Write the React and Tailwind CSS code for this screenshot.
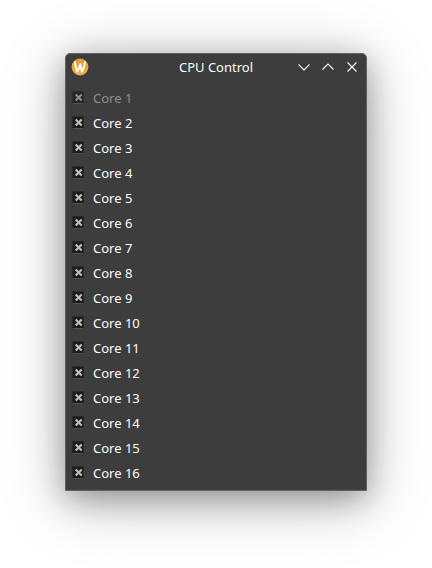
const cores = Array.from({ length: 16 }, (_, i) => i + 1);

function Logo() {
  return (
    <svg className="size-[18px]" viewBox="0 0 18 18" fill="none">
      <defs>
        <linearGradient id="disc" x1="0" y1="0" x2="0" y2="1">
          <stop offset="0" stopColor="#e19a38" />
          <stop offset="1" stopColor="#f0b43c" />
        </linearGradient>
      </defs>
      <circle cx="9" cy="9" r="8.4" fill="url(#disc)" />
      <path
        d="M3.8 4.2C4.4 7.8 5 10.800 6.200 13.500C7.700 11.400 8.600 9 9.300 6.300C9.500 9 10 11.400 10.900 13.500C12.600 11.200 13.500 7.600 14 4.200"
        stroke="#fff"
        strokeWidth="2"
        strokeLinecap="round"
        strokeLinejoin="round"
      />
    </svg>
  );
}

function WindowButton({ d, label }) {
  return (
    <button aria-label={label} className="size-[18px]">
      <svg className="size-[18px]" viewBox="0 0 18 18" fill="none" stroke="#fcfcfc" strokeWidth="1.1">
        <path d={d} />
      </svg>
    </button>
  );
}

function CheckBox({ disabled }) {
  return (
    <span
      className={
        "flex h-[13px] w-3 shrink-0 items-center justify-center border border-b-[#505050] " +
        (disabled
          ? "border-x-[#303030] border-t-[#303030] bg-[#252525]"
          : "border-x-[#2a2a2a] border-t-[#2a2a2a] bg-[#1c1c1c]")
      }
    >
      <svg className="size-[9px] shrink-0" viewBox="0 0 9 9" stroke={disabled ? "#8e8e8e" : "#bcbcbc"} strokeWidth="2.2">
        <path d="M1.700 1.500L7.700 7.500M7.700 1.500L1.700 7.500" />
      </svg>
    </span>
  );
}

export default function App() {
  return (
    <div className="h-[568px] w-[432px] overflow-hidden bg-white pt-[53px] pl-[65px] font-['Noto_Sans',sans-serif] text-[13px] text-[#fcfcfc]">
      <div className="flex h-[438px] w-[302px] flex-col rounded-t-[5px] border border-[#626262] bg-[#3d3d3d] shadow-[0_10px_64px_rgba(0,0,0,0.25),0_8px_30px_rgba(0,0,0,0.3)]">
        <header className="grid h-[26px] grid-cols-[1fr_auto_1fr] items-center px-[5px]">
          <Logo />
          <span className="leading-[18px] text-[#fcfcfc]">CPU Control</span>
          <div className="flex justify-end gap-1.5">
            <WindowButton label="Minimize" d="M3.500 6.500L9 12L14.500 6.500" />
            <WindowButton label="Maximize" d="M3.500 11.500L9 6L14.500 11.500" />
            <WindowButton label="Close" d="M4.500 4.500L13.500 13.500M13.500 4.500L4.500 13.500" />
          </div>
        </header>
        <main className="mt-[5px] flex flex-col pl-[6px]">
          {cores.map((n) => (
            <label key={n} className="flex h-[25px] items-center gap-[9px]">
              <CheckBox disabled={n === 1} />
              <span className={"pt-0.5 leading-[19px] " + (n === 1 ? "text-[#8e8e8e]" : "")}>Core {n}</span>
            </label>
          ))}
        </main>
      </div>
    </div>
  );
}
